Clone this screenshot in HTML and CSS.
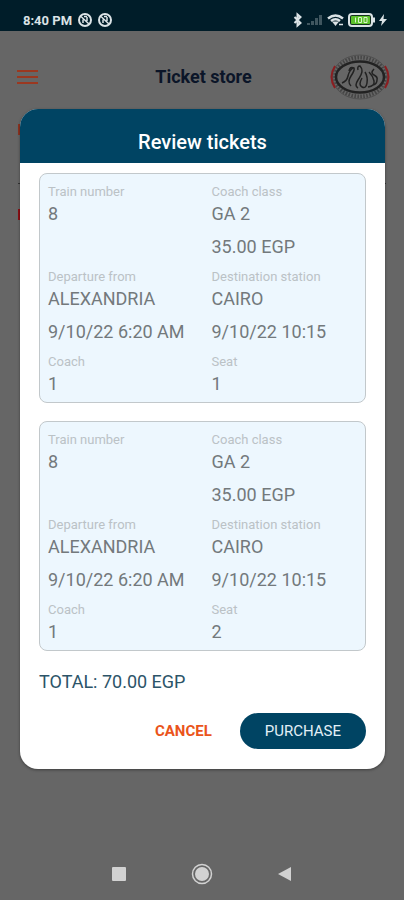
FILE: index.html
```html
<!DOCTYPE html>
<html lang="en">
<head>
    <meta charset="UTF-8"/>
    <meta name="viewport" content="width=device-width, initial-scale=1.0"/>
    <title>Ticket store</title>
    <link rel="stylesheet" href="styles.css">
</head>
<body>
<div class="screen">
    <div class="status-bar">
        <span class="clock">8:40 PM</span>
        <svg class="status-dot" width="16" height="16" viewBox="0 0 16 16" fill="none" stroke="#dbe3e6" stroke-width="2">
            <circle cx="8" cy="8" r="6"/>
            <path d="M4 4.5l8 7.5M6 11V7.5M10 5v4M7 4.5h3" stroke-width="1.5"/>
        </svg>
        <svg class="status-dot" width="16" height="16" viewBox="0 0 16 16" fill="none" stroke="#dbe3e6" stroke-width="2">
            <circle cx="8" cy="8" r="6"/>
            <path d="M4 4.5l8 7.5M6 11V7.5M10 5v4M7 4.5h3" stroke-width="1.5"/>
        </svg>
        <div class="status-icons">
            <svg width="10" height="16" viewBox="0 0 10 16" fill="none" stroke="#dbe3e6" stroke-width="2">
                <path d="M1.5 5l6 6-3 2.5v-11l3 2.5-6 6"/>
            </svg>
            <svg width="18" height="16" viewBox="0 0 18 16" fill="#3f565f">
                <path d="M1 13v-2h3v2zM5 13v-4h3v4zM9 13V6h3v7zM13 13V3h3v10z"/>
            </svg>
            <svg width="18" height="16" viewBox="0 0 18 16" fill="none" stroke="#dbe3e6" stroke-width="2.5">
                <path d="M1 6.5q7.5-6 15 0M4 9q4.5-3.5 9 0"/>
                <path d="M5 9.5h7L8.500 14z" fill="#dbe3e6" stroke="none"/>
                <path d="M12 12.5h4" stroke-width="1.5"/>
            </svg>
            <svg width="28" height="16" viewBox="0 0 28 16">
                <rect x="1" y="2" width="23" height="12" rx="3" fill="#14301f" stroke="#dbe3e6" stroke-width="2"/>
                <rect x="3" y="4" width="19" height="8" rx="1" fill="#5cc22c"/>
                <path d="M7.5 5.500v5M10.500 5.500h3v5h-3zM16 5.500h3v5h-3z" fill="none" stroke="#d8f3cb"/>
                <path d="M25 5.500h2v5h-2z" fill="#dbe3e6"/>
            </svg>
            <svg width="8" height="16" viewBox="0 0 8 16" fill="#dbe3e6">
                <path d="M5 2L0 9h3l-1 5 6-7H4.500z"/>
            </svg>
        </div>
    </div>

    <header class="app-bar">
        <button class="menu" aria-label="Menu">
            <span></span><span></span><span></span>
        </button>
        <h1>Ticket store</h1>
        <svg class="logo" width="60" height="46" viewBox="0 0 60 46" fill="none">
            <ellipse cx="30" cy="23" rx="25" ry="19.5" stroke="#454545" stroke-width="4" stroke-dasharray="1.5 1.5"/>
            <ellipse cx="30" cy="23" rx="27.5" ry="22" stroke="#505050"/>
            <path d="M5 12Q-2 23 5 34M55 12Q62 23 55 34" stroke="#8c1d20" stroke-width="2"/>
            <ellipse cx="30" cy="23" rx="24" ry="15.5" fill="#666" stroke="#222" stroke-width="2.5"/>
            <path d="M12 29q5-2 6-7t5-8M21 32q-4-4 0-10t3-8q-4-2-5 3M28 34q-4-2 0-8t4-9-2-5q-3 0-2 4M32 24q-4 7 0 9t5-4-2-11M38 33q7-1 6-6t-5-9M44 15q-4 4 0 6t3 5q0 4-4 5" stroke="#222" stroke-width="1.5"/>
        </svg>
    </header>

    <main class="page">
        <div class="mark mark-light"></div>
        <hr class="line">
        <div class="mark"></div>
    </main>

    <nav class="nav-bar">
        <button aria-label="Recent apps">
            <svg width="22" height="22" viewBox="0 0 22 22"><rect x="4" y="4" width="14" height="14" rx="1" fill="#d2d2d2"/></svg>
        </button>
        <button aria-label="Home">
            <svg width="22" height="22" viewBox="0 0 22 22">
                <circle cx="11" cy="11" r="9.5" fill="none" stroke="#d2d2d2" stroke-width="1.5"/>
                <circle cx="11" cy="11" r="7" fill="#d2d2d2"/>
            </svg>
        </button>
        <button aria-label="Back">
            <svg width="22" height="22" viewBox="0 0 22 22"><path d="M17 4v14L4 11z" fill="#d2d2d2"/></svg>
        </button>
    </nav>

    <div class="modal" role="dialog" aria-labelledby="modalTitle">
        <h2 id="modalTitle">Review tickets</h2>
        <div class="modal-body">
            <section class="ticket">
                <div class="cell">
                    <p class="label">Train number</p>
                    <p class="value">8</p>
                </div>
                <div class="cell">
                    <p class="label">Coach class</p>
                    <p class="value">GA 2</p>
                    <p class="value">35.00 EGP</p>
                </div>
                <div class="cell">
                    <p class="label">Departure from</p>
                    <p class="value">ALEXANDRIA</p>
                    <p class="value">9/10/22 6:20 AM</p>
                </div>
                <div class="cell">
                    <p class="label">Destination station</p>
                    <p class="value">CAIRO</p>
                    <p class="value">9/10/22 10:15</p>
                </div>
                <div class="cell">
                    <p class="label">Coach</p>
                    <p class="value">1</p>
                </div>
                <div class="cell">
                    <p class="label">Seat</p>
                    <p class="value">1</p>
                </div>
            </section>

            <section class="ticket">
                <div class="cell">
                    <p class="label">Train number</p>
                    <p class="value">8</p>
                </div>
                <div class="cell">
                    <p class="label">Coach class</p>
                    <p class="value">GA 2</p>
                    <p class="value">35.00 EGP</p>
                </div>
                <div class="cell">
                    <p class="label">Departure from</p>
                    <p class="value">ALEXANDRIA</p>
                    <p class="value">9/10/22 6:20 AM</p>
                </div>
                <div class="cell">
                    <p class="label">Destination station</p>
                    <p class="value">CAIRO</p>
                    <p class="value">9/10/22 10:15</p>
                </div>
                <div class="cell">
                    <p class="label">Coach</p>
                    <p class="value">1</p>
                </div>
                <div class="cell">
                    <p class="label">Seat</p>
                    <p class="value">2</p>
                </div>
            </section>

            <p class="total">TOTAL: 70.00 EGP</p>
            <div class="actions">
                <button class="cancel">CANCEL</button>
                <button class="purchase">PURCHASE</button>
            </div>
        </div>
    </div>
</div>
</body>
</html>
```

FILE: styles.css
```css
* {
    margin: 0;
    padding: 0;
    box-sizing: border-box;
}

body {
    font-family: Roboto, "Liberation Sans", sans-serif;
    background-color: #666;
}

button {
    border: none;
    background: none;
    font-family: inherit;
}

.screen {
    position: relative;
    display: flex;
    flex-direction: column;
    min-height: 100vh;
}

.status-bar {
    display: flex;
    align-items: center;
    height: 31px;
    padding: 9px 17px 0 23px;
    background-color: #001d29;
}

.clock {
    margin-right: 5px;
    font-size: 13px;
    font-weight: 700;
    color: #dbe3e6;
}

.status-dot {
    margin-right: 4px;
}

.status-icons {
    display: flex;
    gap: 3px;
    margin-left: auto;
}

.app-bar {
    display: grid;
    grid-template-columns: 60px 1fr 60px;
    align-items: center;
    height: 91px;
    padding: 0 14px 0 17px;
}

.menu {
    display: flex;
    flex-direction: column;
    gap: 4px;
    width: 21px;
}

.menu span {
    height: 2px;
    background-color: #9b3820;
}

.app-bar h1 {
    font-size: 18px;
    font-weight: 700;
    text-align: center;
    color: #0b1528;
}

.page {
    flex: 1;
    padding: 2px 18px;
}

.mark {
    width: 12px;
    height: 11px;
    background-color: #8c0f14;
}

.mark-light {
    background-color: #8d3320;
}

.line {
    margin: 48px 0 25px;
    border: none;
    border-top: 1px solid #333;
}

.nav-bar {
    display: flex;
    justify-content: center;
    gap: 61px;
    padding: 15px 0;
}

.nav-bar button {
    height: 22px;
}

/* review dialog */
.modal {
    position: absolute;
    top: 109px;
    left: 20px;
    right: 19px;
    overflow: hidden;
    border-radius: 18px;
    background-color: #fff;
    box-shadow: 0 1px 3px rgba(0, 0, 0, 0.4);
}

.modal h2 {
    padding: 21px 0 9px;
    font-size: 20px;
    font-weight: 500;
    line-height: 24px;
    text-align: center;
    color: #fff;
    background-color: #004463;
}

.modal-body {
    padding: 10px 19px 20px;
}

.ticket {
    display: grid;
    grid-template-columns: 1fr 1fr;
    gap: 8px 10px;
    margin-bottom: 18px;
    padding: 9px 0 5px 8px;
    border: 1px solid #c2c8cb;
    border-radius: 8px;
    background-color: #edf7fe;
}

.label {
    font-size: 13px;
    line-height: 18px;
    color: #bbc2c6;
}

.value {
    font-size: 18px;
    line-height: 26px;
    color: #73797c;
}

.value + .value {
    margin-top: 7px;
}

.total {
    font-size: 18px;
    line-height: 26px;
    color: #2c5468;
}

.actions {
    display: flex;
    justify-content: flex-end;
    align-items: center;
    gap: 28px;
    margin-top: 18px;
}

.cancel {
    font-size: 15px;
    font-weight: 700;
    color: #ea541b;
}

.purchase {
    height: 36px;
    padding: 0 25px;
    border-radius: 18px;
    font-size: 15px;
    color: #e3f0f7;
    background-color: #004463;
}
```
